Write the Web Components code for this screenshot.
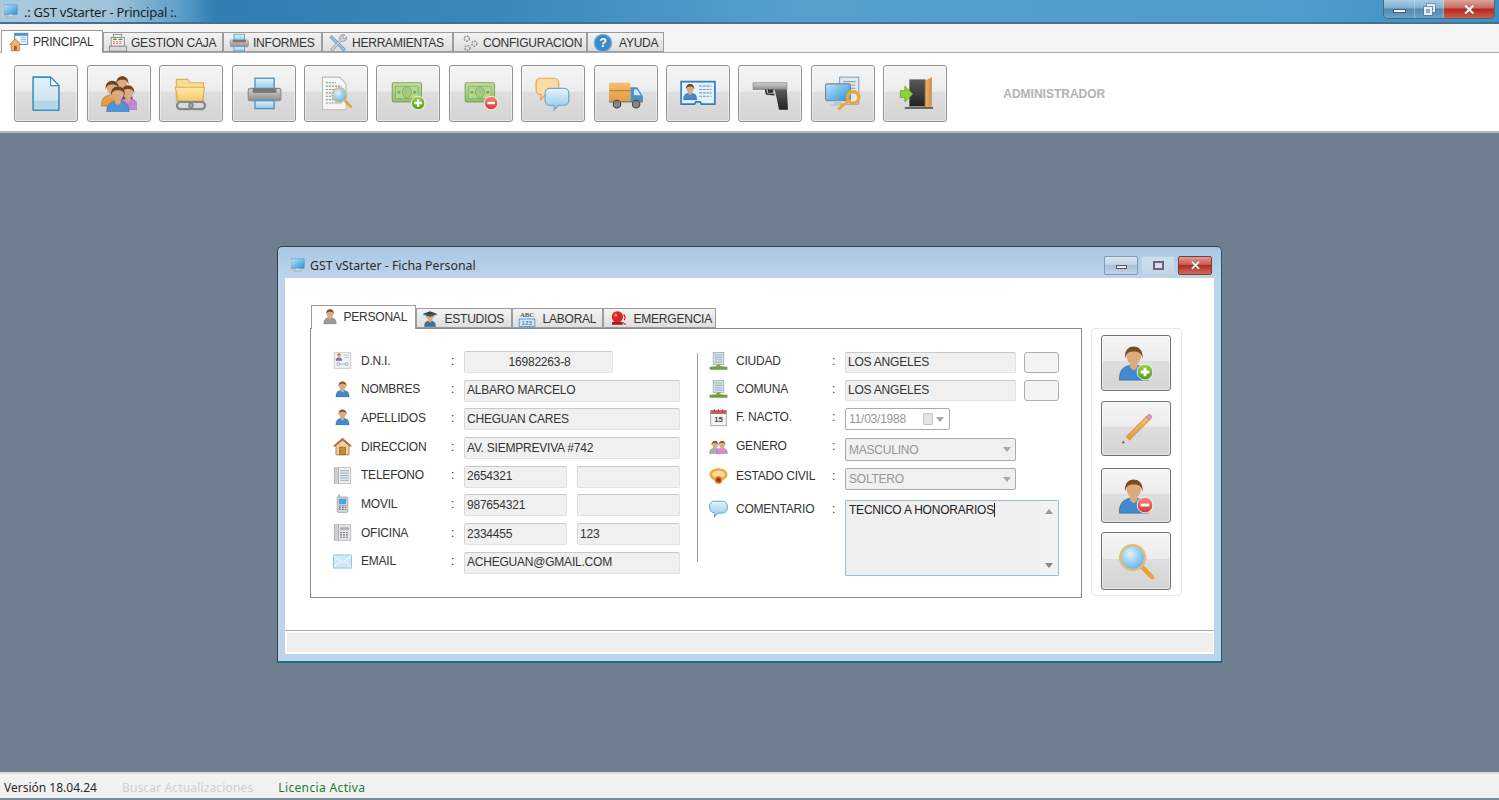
<!DOCTYPE html>
<html lang="es"><head><meta charset="utf-8"><title>GST vStarter</title>
<style>
html,body{margin:0;padding:0;height:800px;width:1499px;overflow:hidden;background:#6f7e91;font:12px "Liberation Sans",Arial,sans-serif;color:#333}
</style></head><body>
<gst-app>
  <gst-titlebar slot="title" icon="computer">.: GST vStarter - Principal :.</gst-titlebar>
  <gst-tabs slot="tabs">
    <gst-tab active w="102" icon="home" pad="7" gap="4">PRINCIPAL</gst-tab>
    <gst-tab w="120" icon="register" pad="4" gap="3">GESTION CAJA</gst-tab>
    <gst-tab w="99" icon="printer" pad="5" gap="4">INFORMES</gst-tab>
    <gst-tab w="131" icon="tools" pad="5" gap="4">HERRAMIENTAS</gst-tab>
    <gst-tab w="134" icon="gears" pad="6" gap="3">CONFIGURACION</gst-tab>
    <gst-tab w="77" icon="help" pad="5" gap="6">AYUDA</gst-tab>
  </gst-tabs>
  <gst-toolbar slot="toolbar">
    <gst-toolbtn icon="doc"></gst-toolbtn><gst-toolbtn icon="people"></gst-toolbtn><gst-toolbtn icon="folderlink"></gst-toolbtn><gst-toolbtn icon="printer"></gst-toolbtn><gst-toolbtn icon="preview"></gst-toolbtn><gst-toolbtn icon="moneyplus"></gst-toolbtn><gst-toolbtn icon="moneyminus"></gst-toolbtn><gst-toolbtn icon="chat"></gst-toolbtn><gst-toolbtn icon="truck"></gst-toolbtn><gst-toolbtn icon="idcard"></gst-toolbtn><gst-toolbtn icon="gun"></gst-toolbtn><gst-toolbtn icon="netkey"></gst-toolbtn><gst-toolbtn icon="exit"></gst-toolbtn>
    <span slot="label">ADMINISTRADOR</span>
  </gst-toolbar>
  <gst-window slot="desktop" icon="computer" caption="GST vStarter - Ficha Personal">
    <gst-subtabs slot="tabs">
      <gst-tab small active w="105" icon="usergray" pad="9" gap="5">PERSONAL</gst-tab>
      <gst-tab small w="96" icon="graduate" pad="4" gap="6">ESTUDIOS</gst-tab>
      <gst-tab small w="91" icon="abc" pad="5" gap="7">LABORAL</gst-tab>
      <gst-tab small w="113" icon="alarm" pad="5" gap="7">EMERGENCIA</gst-tab>
    </gst-subtabs>
    <gst-formcol slot="left" style="--label:90px;--icon:28px;--lift:-3px">
      <gst-row icon="dnicard" label="D.N.I."><gst-field center style="width:149px">16982263-8</gst-field></gst-row>
      <gst-row icon="userblue" label="NOMBRES"><gst-field>ALBARO MARCELO</gst-field></gst-row>
      <gst-row icon="userblue" label="APELLIDOS"><gst-field>CHEGUAN CARES</gst-field></gst-row>
      <gst-row icon="house" label="DIRECCION"><gst-field>AV. SIEMPREVIVA #742</gst-field></gst-row>
      <gst-row icon="phonebook" label="TELEFONO"><gst-field>2654321</gst-field><gst-field></gst-field></gst-row>
      <gst-row icon="mobile" label="MOVIL"><gst-field>987654321</gst-field><gst-field></gst-field></gst-row>
      <gst-row icon="office" label="OFICINA"><gst-field>2334455</gst-field><gst-field>123</gst-field></gst-row>
      <gst-row icon="mail" label="EMAIL"><gst-field>ACHEGUAN@GMAIL.COM</gst-field></gst-row>
    </gst-formcol>
    <gst-formcol slot="right" style="--label:96px;--icon:27px;--lift:-4px">
      <gst-row icon="city" label="CIUDAD" style="height:21px"><gst-field style="width:171px;flex:none">LOS ANGELES</gst-field><gst-blank></gst-blank></gst-row>
      <gst-row icon="city" label="COMUNA" style="height:21px"><gst-field style="width:171px;flex:none">LOS ANGELES</gst-field><gst-blank></gst-blank></gst-row>
      <gst-row icon="calendar" label="F. NACTO." style="height:22px"><gst-combo date style="width:105px">11/03/1988</gst-combo></gst-row>
      <gst-row icon="couple" label="GENERO" style="height:23px;margin-top:1px;--lift:-7px"><gst-combo style="width:171px">MASCULINO</gst-combo></gst-row>
      <gst-row icon="ring" label="ESTADO CIVIL" style="height:22px;--lift:-6px"><gst-combo style="width:171px">SOLTERO</gst-combo></gst-row>
      <gst-row icon="bubble" label="COMENTARIO" top style="height:76px;margin-top:3px"><gst-memo>TECNICO A HONORARIOS</gst-memo></gst-row>
    </gst-formcol>
    <gst-sidebtn slot="side" icon="userplus" style="height:56px;margin-top:6px"></gst-sidebtn>
    <gst-sidebtn slot="side" icon="pencil" style="height:55px;margin-top:10px"></gst-sidebtn>
    <gst-sidebtn slot="side" icon="userminus" style="height:55px;margin-top:12px"></gst-sidebtn>
    <gst-sidebtn slot="side" icon="search" style="height:58px;margin-top:9px"></gst-sidebtn>
  </gst-window>
  <gst-status slot="status">
    <span>Versión 18.04.24</span><span style="color:#cfcfcf;margin-left:25px;letter-spacing:.15px">Buscar Actualizaciones</span><span style="color:#1f7a2c;margin-left:25px;letter-spacing:.35px">Licencia Activa</span>
  </gst-status>
</gst-app>
<script>
const DEFS=`<defs>
<linearGradient id="blue" x1="0" y1="0" x2="0" y2="1"><stop offset="0" stop-color="#e6f4fc"/><stop offset="1" stop-color="#8cc6ea"/></linearGradient>
<linearGradient id="paper" x1="0" y1="0" x2="0" y2="1"><stop offset="0" stop-color="#e3f1f8"/><stop offset=".7" stop-color="#cfe5f0"/><stop offset=".71" stop-color="#b3d6e6"/><stop offset="1" stop-color="#b3d6e6"/></linearGradient>
<linearGradient id="gray" x1="0" y1="0" x2="0" y2="1"><stop offset="0" stop-color="#d4d4d4"/><stop offset="1" stop-color="#8b8b8b"/></linearGradient>
<linearGradient id="yellow" x1="0" y1="0" x2="0" y2="1"><stop offset="0" stop-color="#ffe9a8"/><stop offset="1" stop-color="#f5c868"/></linearGradient>
<linearGradient id="orange" x1="0" y1="0" x2="0" y2="1"><stop offset="0" stop-color="#f6bd72"/><stop offset="1" stop-color="#e09a42"/></linearGradient>
<linearGradient id="green" x1="0" y1="0" x2="0" y2="1"><stop offset="0" stop-color="#c7e0a6"/><stop offset="1" stop-color="#8fbf6a"/></linearGradient>
<linearGradient id="badgeg" x1="0" y1="0" x2="0" y2="1"><stop offset="0" stop-color="#9fd34a"/><stop offset="1" stop-color="#4f9a14"/></linearGradient>
<linearGradient id="badger" x1="0" y1="0" x2="0" y2="1"><stop offset="0" stop-color="#f58a80"/><stop offset="1" stop-color="#d8352c"/></linearGradient>
<linearGradient id="screen" x1="0" y1="0" x2="1" y2="1"><stop offset="0" stop-color="#bfe6fb"/><stop offset="1" stop-color="#2b8fd6"/></linearGradient>
<linearGradient id="wood" x1="0" y1="0" x2="1" y2="0"><stop offset="0" stop-color="#e9b77c"/><stop offset="1" stop-color="#c98a48"/></linearGradient>
<linearGradient id="dark" x1="0" y1="0" x2="0" y2="1"><stop offset="0" stop-color="#5a5a5a"/><stop offset="1" stop-color="#222"/></linearGradient>
<radialGradient id="lens" cx=".4" cy=".35" r=".7"><stop offset="0" stop-color="#dff3ff"/><stop offset="1" stop-color="#59aee6"/></radialGradient>
</defs>`;
const person=(cx,top,s,shirt='#4d94d6',hair='#6d4522',skin='#dcaa7c')=>`<g transform="translate(${cx} ${top}) scale(${s})"><path d="M-8 18c0-5 3-7.500 8-7.500s8 2.500 8 7.500v1H-8z" fill="${shirt}" stroke="#00000040" stroke-width=".6"/><path d="M-2 8h4v4l-2 1.500L-2 12z" fill="${skin}"/><ellipse cy="5.500" rx="4" ry="5" fill="${skin}"/><path d="M-4.800 7C-6.200-2 6.200-2 4.800 7 4.300 4 3 3 0 3S-4.300 4-4.800 7z" fill="${hair}"/></g>`;
const badge=(cx,cy,r,plus)=>`<circle cx="${cx}" cy="${cy}" r="${r}" fill="url(#${plus?'badgeg':'badger'})" stroke="#fff" stroke-width=".7"/><path d="M${cx-r*.55} ${cy}h${r*1.1}${plus?`M${cx} ${cy-r*.55}v${r*1.1}`:''}" stroke="#fff" stroke-width="${r*.36}"/>`;
const lens=(x,y,r)=>`<path d="M${x+r*.75} ${y+r*.75}L${x+r*1.6} ${y+r*1.6}" stroke="#eda035" stroke-width="${r*.36}" stroke-linecap="round"/><circle cx="${x}" cy="${y}" r="${r}" fill="url(#lens)" stroke="#e3bd76" stroke-width="${r*.2}"/>`;
const monitor=`<rect x="5" y="5" width="24" height="17" rx="1.500" fill="url(#screen)" stroke="#5c8fb5" stroke-width="1"/><path d="M14 22h6l1 4h-8z" fill="#cfd6dc"/><path d="M9 26h16v1.500H9z" fill="#9fb0bd"/><path d="M2 7h3v19H2z" fill="#c9ced2"/>`;
const money=`<rect x="2" y="6" width="26" height="17" rx="1.500" fill="url(#green)" stroke="#7ea65c"/><rect x="5" y="9" width="20" height="11" fill="#b6d692" stroke="#86ac66" stroke-width=".7"/><ellipse cx="15" cy="14.500" rx="4" ry="5" fill="#a3c97e" stroke="#7ea65c" stroke-width=".7"/><circle cx="8" cy="14.500" r="1.300" fill="#7ea65c"/><circle cx="22" cy="14.500" r="1.300" fill="#7ea65c"/>`;
const city=`<rect x="7" y="1" width="18" height="20" fill="#d3dfe8" stroke="#7f97a8"/><path d="M10 5h12M10 9h12M10 13h12M10 17h12" stroke="#a9bccb" stroke-width="2"/><path d="M13 21h6l1 4h-8z" fill="#b78b52"/><path d="M1 25c6-1.500 24-1.500 30 0v5H1z" fill="#6aa33d"/>`;
const ICONS={
computer:monitor,
home:`<rect x="9" y="2" width="21" height="18" fill="#e8f3fa" stroke="#3d7fbf" stroke-width="1.300"/><rect x="9" y="2" width="21" height="4" fill="#4a90d0"/><path d="M19 9h8M19 12h8M19 15h8" stroke="#8ab2cf" stroke-width="1.300"/><path d="M1 20L10 11l9 9h-2.500v10h-13V20z" fill="#f0b26a" stroke="#a8641f" stroke-width="1.100"/><rect x="8" y="22" width="4.500" height="8" fill="#a8641f"/>`,
register:`<rect x="9" y="2" width="13" height="5" fill="#eee" stroke="#666"/><rect x="5" y="7" width="21" height="14" fill="#f2f2ec" stroke="#666"/><path d="M8 10h6M17 10h6" stroke="#3b9a3b" stroke-width="2"/><path d="M8 14h15M8 17h15" stroke="#d55" stroke-width="1.500" stroke-dasharray="3 2"/><rect x="2" y="21" width="28" height="8" fill="#d8d8d8" stroke="#666"/>`,
printer:`<rect x="8" y="2" width="17" height="10" fill="url(#blue)" stroke="#4f93bd" stroke-width="1.200"/><rect x="2" y="11" width="29" height="11" rx="2" fill="url(#gray)" stroke="#8d8d8d"/><rect x="6" y="11" width="21" height="4" fill="#73787c"/><rect x="8" y="22" width="17" height="7" fill="url(#blue)" stroke="#4f93bd" stroke-width="1.200"/>`,
tools:`<path d="M6 4l22 22-3 3L3 7z" fill="#8fc3e8" stroke="#3e78a8"/><path d="M27 3a6 6 0 0 0-8 8L4 26l3 3L22 13a6 6 0 0 0 8-7l-4 3-3-2z" fill="#d0d4d8" stroke="#777"/>`,
gears:`<g fill="none" stroke="#9a9a9a" stroke-width="2.600"><circle cx="11" cy="9" r="4" stroke-dasharray="3 1.500"/><circle cx="23" cy="17" r="4" stroke-dasharray="3 1.500"/><circle cx="12" cy="24" r="4" stroke-dasharray="3 1.500"/></g>`,
help:`<circle cx="16" cy="16" r="14" fill="#3d88c9" stroke="#7fb5e0" stroke-width="2"/><text x="16" y="23" font-family="Liberation Sans" font-size="20" font-weight="700" fill="#fff" text-anchor="middle">?</text>`,
doc:`<path d="M4.500 1h15.500l7.500 7.500V30.500H4.500z" fill="url(#paper)" stroke="#3b93bd" stroke-width="1.400" stroke-linejoin="round"/><path d="M20 1v7.500h7.500z" fill="#f4fafd" stroke="#3b93bd" stroke-linejoin="round"/>`,
people:`${person(19,0,1.100,'#6b4a9a')}${person(10,4,1.200,'#e89b3c')}${person(24,8,1.150,'#c784d6')}${person(15,9,1.250,'#4d94d6')}`,
folderlink:`<path d="M3 3h10l2 3h12v16H3z" fill="#f8dc92" stroke="#dcb055"/><path d="M2 10h26l-2 13H5z" fill="url(#yellow)" stroke="#dcb055"/><g fill="none" stroke="#85888a" stroke-width="2"><rect x="3.500" y="23" width="14" height="6.500" rx="3.200"/><rect x="14.500" y="23" width="14" height="6.500" rx="3.200"/></g>`,
preview:`<path d="M4 1h15l6 6v23H4z" fill="#f7f7f4" stroke="#bbb"/><path d="M7 6h9M7 9h14M7 12h8M7 15h7M7 18h7M7 21h8M7 24h14" stroke="#8d979d" stroke-width="1.100" stroke-dasharray="2 .7"/>${lens(19,17,6.500)}`,
moneyplus:money+badge(25,24,6,true),
moneyminus:money+badge(25,24,6,false),
chat:`<path d="M4 2h13a4 4 0 0 1 4 4v7a4 4 0 0 1-4 4h-8l-4 4 .5-4.500A4 4 0 0 1 1 13V6a4 4 0 0 1 3-4z" fill="#fcdca4" stroke="#e3a75a" stroke-width="1.100"/><path d="M13 11h13a4 4 0 0 1 4 4v7a4 4 0 0 1-4 4h-5l-4 4 .2-4H13a4 4 0 0 1-4-4v-7a4 4 0 0 1 4-4z" fill="url(#blue)" stroke="#6fa8cc" stroke-width="1.100"/>`,
truck:`<rect x="1" y="6" width="19" height="17" rx="1" fill="url(#orange)"/><path d="M1 13h19" stroke="#c77a20"/><path d="M20 10h6l5 8v5H20z" fill="#4c8fc0"/><path d="M23 12h3l3 5h-6z" fill="#cfe8f7"/><circle cx="8" cy="25" r="3.300" fill="#888" stroke="#444"/><circle cx="25" cy="25" r="3.300" fill="#888" stroke="#444"/><path d="M1 23h30" stroke="#777"/>`,
idcard:`<path d="M1 5h30v20H19l-1-2h-4l-1 2H1z" fill="#e6f2fb" stroke="#2f7fc0" stroke-width="1.500"/>${person(9,7,.75,'#3f8ad0')}<path d="M17 9h11M17 12h11M17 15h11M17 18h11" stroke="#6f9dbd" stroke-width="1.100" stroke-dasharray="2.500 .8"/>`,
gun:`<path d="M1 6h30v6H1z" fill="url(#gray)" stroke="#777" stroke-width=".6"/><path d="M14 12h5v3h-5z" fill="#333"/><path d="M20 12h11l1 18h-8l-2-10z" fill="url(#dark)"/><path d="M12 12l1 4 7 .5" fill="none" stroke="#333" stroke-width="1.500"/>`,
netkey:`<rect x="13" y="1" width="17" height="24" fill="#e0e8ee" stroke="#8fa0ae"/><path d="M16 5h11M16 8h11M16 11h11" stroke="#8aa7bc"/><rect x="0.500" y="7" width="22" height="15" rx="1.500" fill="url(#screen)" stroke="#6f8496"/><path d="M8 22h7v3h3v1.500H5V25h3z" fill="#bcc6ce"/><circle cx="25" cy="19" r="5" fill="none" stroke="#eba83a" stroke-width="3"/><path d="M22 22.500l-9 8-2-1 .5-2 2-.5.5-2 2-.5 4-3.500z" fill="#eba83a"/>`,
exit:`<rect x="11" y="3" width="14" height="24" fill="url(#dark)"/><path d="M25 4l6-3v26l-6 1z" fill="url(#wood)"/><path d="M25 3v25" stroke="#a5712f"/><rect x="7" y="27.500" width="25" height="1.800" fill="#666"/><path d="M3 13h4V9l7 7-7 7v-4H3z" fill="#8fd23a" stroke="#5ea321" stroke-width=".7"/>`,
usergray:person(16,2,1.400,'#9a9a9a','#6d4522'),
userblue:person(16,2,1.400,'#3f8ad0','#8a5a2c'),
graduate:`${person(16,6,1.250,'#3f6f9c')}<path d="M3 7l13-5 13 5-13 5z" fill="#333c46"/><path d="M4 7h24v3H4z" fill="#3f7f6f" opacity=".5"/>`,
abc:`<text x="16" y="12" font-family="Liberation Serif" font-weight="700" font-size="12" text-anchor="middle" fill="#555">ABC</text><rect x="2" y="16" width="28" height="13" fill="#d6e9f8" stroke="#2f7fc0" stroke-width="1.300"/><text x="16" y="26.500" font-family="Liberation Sans" font-weight="700" font-size="10" text-anchor="middle" fill="#2f7fc0" letter-spacing="1">123</text>`,
alarm:`<circle cx="15" cy="12" r="10" fill="#e02424"/><circle cx="12" cy="9" r="3" fill="#f58a80"/><path d="M6 21h17l2 5H5z" fill="#a81717"/><path d="M26 8c3 3 3 7 1 10M24 22l6 4" stroke="#b52020" stroke-width="2" fill="none"/>`,
dnicard:`<rect x="2" y="3" width="28" height="26" fill="#f0f2f4" stroke="#a8b0b6"/>${person(10,4,.650,'#7a6ab0')}<path d="M19 7h8M19 11h8" stroke="#9aa"/><circle cx="9" cy="22" r="2.500" fill="none" stroke="#6a87a0"/><circle cx="23" cy="22" r="2.500" fill="none" stroke="#6a87a0"/><path d="M12 22h8" stroke="#6a87a0"/>`,
house:`<path d="M1 15L16 2l15 13h-4v15H5V15z" fill="#eed3a0" stroke="#8a6a3a" stroke-width="1.200"/><path d="M1 15L16 2l15 13-3 1L16 6 4 16z" fill="#b36b2d"/><rect x="11" y="17" width="10" height="13" fill="#c98a38" stroke="#8a5a20"/>`,
phonebook:`<rect x="2" y="3" width="7" height="26" fill="#cfcfcf" stroke="#999"/><rect x="9" y="3" width="21" height="26" fill="#eef2f5" stroke="#999"/><path d="M12 8h15M12 12h15M12 16h15M12 20h15M12 24h15" stroke="#8fa3b2" stroke-width="1.600"/>`,
mobile:`<rect x="9" y="1" width="3" height="6" fill="#aaa"/><rect x="7" y="5" width="18" height="26" rx="2" fill="#d0d4d8" stroke="#8c9094"/><rect x="10" y="8" width="12" height="9" fill="#4da3dc"/><path d="M10 20h3M15 20h3M20 20h2M10 23h3M15 23h3M20 23h2M10 26h3M15 26h3M20 26h2" stroke="#666" stroke-width="1.500"/>`,
office:`<rect x="2" y="3" width="7" height="26" fill="#cfcfcf" stroke="#999"/><rect x="9" y="3" width="21" height="26" fill="#e4e7e9" stroke="#999"/><rect x="12" y="7" width="15" height="5" fill="#aab4ba"/><path d="M12 16h3M17 16h3M22 16h3M12 20h3M17 20h3M22 20h3M12 24h3M17 24h3M22 24h3" stroke="#666" stroke-width="2"/>`,
mail:`<rect x="1" y="5" width="30" height="22" fill="#cfe9f8" stroke="#79b4d8" stroke-width="1.300"/><path d="M1 6l15 12L31 6M1 26l11-11M31 26L20 15" fill="none" stroke="#fff" stroke-width="1.500"/>`,
city:city,
calendar:`<rect x="3" y="4" width="26" height="26" fill="#f5f5f5" stroke="#777"/><rect x="3" y="4" width="26" height="6" fill="#d9554c"/><path d="M9 2v5M16 2v5M23 2v5" stroke="#555" stroke-width="1.500"/><text x="16" y="24" font-family="Liberation Sans" font-size="13" font-weight="700" text-anchor="middle" fill="#444">15</text>`,
couple:`${person(10,3,1.150,'#a8adb2','#7a4e26')}${person(22,3,1.150,'#d88ad8','#8a5526')}`,
ring:`<ellipse cx="16" cy="11" rx="13" ry="8.500" fill="#f6dca0" stroke="#eda93a" stroke-width="4.500"/><circle cx="16" cy="20" r="6" fill="#c9461f" stroke="#eda93a" stroke-width="2"/><circle cx="16" cy="20" r="2" fill="#8a1f10"/>`,
bubble:`<path d="M9 2h14c5 0 8 4 8 10s-3 10-8 10h-8l-6 7 1-7c-5 0-9-4-9-10S4 2 9 2z" fill="url(#blue)" stroke="#5ea0cc" stroke-width="1.600"/>`,
userplus:person(14,1,1.600,'#3f8ad0','#7a4b22')+badge(24,24,7,true),
userminus:person(14,1,1.600,'#3f8ad0','#7a4b22')+badge(24,24,7,false),
pencil:`<path d="M7 23L25 5l3 3-18 18z" fill="url(#orange)" stroke="#c87f20" stroke-width=".7"/><path d="M25 5l1.500-1.500a1.800 1.800 0 0 1 2.500 0l.5.5a1.800 1.800 0 0 1 0 2.500L28 8z" fill="#d69ad0" stroke="#a56a9e" stroke-width=".5"/><path d="M7 23l3 3-6 2.500z" fill="#ecd6ae"/><path d="M3.500 29l1-2.500 1.500 1.500z" fill="#444"/>`,
search:lens(13,13,11),
};
class Base extends HTMLElement{
  constructor(){super();this.attachShadow({mode:'open'});}
  render(h){this.shadowRoot.innerHTML=h;}
}
const TXT=`font:12px "Liberation Sans",sans-serif;letter-spacing:-.22px`;
const reg=(n,c)=>customElements.define(n,c);
reg('gst-icon',class extends Base{connectedCallback(){const s=this.getAttribute('size')||16;this.render(`<style>:host{display:inline-flex;width:${s}px;height:${s}px;flex:none}svg{width:100%;height:100%;display:block}</style><svg viewBox="0 0 32 32" xmlns="http://www.w3.org/2000/svg">${DEFS}${ICONS[this.getAttribute('name')]||''}</svg>`);}});
reg('gst-app',class extends Base{connectedCallback(){this.render(`<style>:host{display:flex;flex-direction:column;width:1499px;height:800px;overflow:hidden}
.desk{flex:1;position:relative;background:#6f7e91;min-height:0}</style>
<slot name="title"></slot><slot name="tabs"></slot><slot name="toolbar"></slot><div class="desk"><slot name="desktop"></slot></div><slot name="status"></slot>`);}});
reg('gst-titlebar',class extends Base{connectedCallback(){this.render(`<style>:host{display:flex;align-items:flex-start;height:24px;box-sizing:border-box;background:linear-gradient(90deg,#a9c9de 0,#9fc3da 110px,#5d9ec9 180px,#2f7eb3 215px,#3a89bd 500px,#55a0cd 800px,#4e9ccb 1300px,#3f8fc2 1499px);border-bottom:2px solid #46708e;font:13px "Noto Sans",sans-serif;color:#222;position:relative}
.l{display:flex;align-items:center;height:22px;gap:5px;padding-left:1px}
.t{letter-spacing:-.25px;white-space:nowrap;padding-top:2px}
.caps{display:flex;position:absolute;right:4px;top:0;height:19px;border:1px solid #3e6a88;border-top:0;border-radius:0 0 5px 5px;overflow:hidden;box-sizing:border-box}
.b{display:flex;align-items:center;justify-content:center;box-sizing:border-box;background:linear-gradient(#a8cde4,#7fb0d0 45%,#4f88ad 50%,#6da3c6);border-right:1px solid #cfe0ec66}
.x{background:linear-gradient(#dfa49b,#c8695e 45%,#b3261b 50%,#cf5f4a);border-right:0}
.m{width:13px;height:4px;margin-top:4px;background:#eef3f6;border:1px solid #3f5f78;box-sizing:border-box}
.r{position:relative;width:11px;height:11px;display:block}
.r::before,.r::after{content:"";position:absolute;box-sizing:border-box;width:8px;height:8px;border:2px solid #e8eef2;outline:1px solid #4b6f8880}
.r::before{right:0;top:0}.r::after{left:0;bottom:0;background:#7fb0d0}
.xx{font:700 15px "Liberation Sans";color:#f3f3f3;line-height:1;text-shadow:0 0 1px #444}
</style><div class="l"><gst-icon name="${this.getAttribute('icon')}" size="18"></gst-icon><span class="t"><slot></slot></span></div>
<div class="caps"><div class="b" style="width:31px"><i class="m"></i></div><div class="b" style="width:29px"><i class="r"></i></div><div class="b x" style="width:50px"><span class="xx" aria-hidden="true">✕</span></div></div>`);}});
const stripCss=`:host{display:flex;align-items:flex-end;box-sizing:border-box}`;
reg('gst-tabs',class extends Base{connectedCallback(){this.render(`<style>${stripCss}:host{height:29px;padding-left:1px;background:#f5f5f5;border-bottom:1px solid #a9a9a9}</style><slot></slot>`);}});
reg('gst-subtabs',class extends Base{connectedCallback(){this.render(`<style>${stripCss}:host{height:23px;position:relative;z-index:1;padding-left:.5px}</style><slot></slot>`);}});
reg('gst-tab',class extends Base{connectedCallback(){const a=this.hasAttribute('active'),sm=this.hasAttribute('small'),
 w=this.getAttribute('w'),p=this.getAttribute('pad'),g=this.getAttribute('gap');
 const h=a?(sm?23:22):20;
 this.render(`<style>:host{display:flex;align-items:center;box-sizing:border-box;width:${w}px;height:${h}px;padding-left:${p}px;gap:${g}px;flex:none;white-space:nowrap;color:#333;${TXT};
 border:1px solid #9c9c9c;${a?`border-bottom:0;background:#fff;margin-bottom:-1px;height:${h+1}px;padding-bottom:1px;position:relative;z-index:2`:`background:linear-gradient(#f3f3f3,#dedede);padding-top:1px`}}
 </style><gst-icon name="${this.getAttribute('icon')}" size="${sm?18:20}"></gst-icon><slot></slot>`);}});
reg('gst-toolbar',class extends Base{connectedCallback(){this.render(`<style>:host{display:flex;align-items:flex-start;height:80px;box-sizing:border-box;padding:12px 0 0 14.4px;background:#fff;border-bottom:2px solid #b7b7b7}
.btns{display:flex;gap:8.42px}.lab{margin-left:56px;margin-top:22px;color:#b3b3b3;font:700 12px "Liberation Sans",sans-serif}</style>
<div class="btns"><slot></slot></div><div class="lab"><slot name="label"></slot></div>`);}});
const btnCss=`display:flex;align-items:center;justify-content:center;box-sizing:border-box;border:1px solid #929292;border-radius:3px;background:linear-gradient(#f5f5f5 0,#ececec 46%,#dedede 47%,#d4d4d4 100%);box-shadow:inset 0 0 0 1px #ffffff70`;
reg('gst-toolbtn',class extends Base{connectedCallback(){this.render(`<style>:host{width:64px;height:57px;${btnCss}}</style><gst-icon name="${this.getAttribute('icon')}" size="36"></gst-icon>`);}});
reg('gst-sidebtn',class extends Base{connectedCallback(){this.render(`<style>:host{width:70px;flex:none;${btnCss};border-color:#737373;display:flex}</style><gst-icon name="${this.getAttribute('icon')}" size="36"></gst-icon>`);}});
reg('gst-window',class extends Base{connectedCallback(){this.render(`<style>:host{position:absolute;left:277px;top:113px;width:945px;height:417px;box-sizing:border-box;display:flex;flex-direction:column;border:1px solid #2f3f4f;border-right-color:#1f5a6e;border-bottom:2px solid #1c6f86;border-radius:5px 5px 0 0;background:linear-gradient(#aac7e2 0,#bcd3ea 30px,#bcd4ea 100%);color:#333}
.head{height:31px;flex:none;box-sizing:border-box;display:flex;align-items:center;padding:5px 9px 0 10px;font:12.3px "Noto Sans",sans-serif;color:#2b2b2b}
.head .cap{margin-left:4px}
.head .sp{flex:1}
.c{width:34px;height:19px;box-sizing:border-box;border:1px solid #7f9ab3;border-radius:2px;margin-left:3px;display:flex;align-items:center;justify-content:center;background:linear-gradient(#dbe6f1,#c3d4e5 45%,#a8bfd6 50%,#c5d6e6)}
.mx{background:linear-gradient(#cfdfee,#c3d6e8);border-color:#bcd0e2}
.cl{border-color:#7a3b36;background:linear-gradient(#e29a90,#c9594d 45%,#b32d22 50%,#d2695c)}
.c i{display:block;box-sizing:border-box}
.c1 i{width:11px;height:4px;margin-top:3px;background:#eee;border:1px solid #556}
.c2 i{width:11px;height:9px;border:2px solid #667;background:#dde}
.xx{color:#f3f3f3;font:700 13px "Liberation Sans";line-height:1;text-shadow:0 0 1px #333}
.client{flex:1;margin:0 7px 7px 7px;background:#fff;display:flex;flex-direction:column;min-height:0}
.top{flex:1;display:flex;padding:27px 0 0 25px;min-height:0;align-items:flex-start}
.tabbox{width:772px;flex:none}
.panel{box-sizing:border-box;height:270px;border:1px solid #8a8a8a;display:flex;padding:22px 0 0 22px;background:#fff}
.sep{width:1px;height:209px;background:#9a9a9a;margin:2px 11px 0 17px;flex:none}
.side{box-sizing:border-box;width:91px;height:268px;margin:23px 0 0 9px;border:1px solid #e8e8e8;border-radius:4px;padding-left:9px;display:flex;flex-direction:column}
.foot{height:24px;box-sizing:border-box;border-top:1px solid #a8a8a8;padding:2px 1px 2px 2px;flex:none}
.foot div{height:100%;background:#f0eeee}
</style>
<div class="head"><gst-icon name="${this.getAttribute('icon')}" size="18"></gst-icon><span class="cap">${this.getAttribute('caption')}</span><span class="sp"></span>
<div class="c c1"><i></i></div><div class="c mx c2"><i></i></div><div class="c cl"><span class="xx" aria-hidden="true">✕</span></div></div>
<div class="client"><div class="top"><div class="tabbox"><slot name="tabs"></slot><div class="panel"><slot name="left"></slot><div class="sep"></div><slot name="right"></slot></div></div>
<div class="side"><slot name="side"></slot></div></div><div class="foot"><div></div></div></div>`);}});
reg('gst-formcol',class extends Base{connectedCallback(){const right=this.getAttribute('slot')==='right';this.render(`<style>:host{display:flex;flex-direction:column;gap:${right?'7px':'6.7px'};${right?'margin-top:1px;':''}}</style><slot></slot>`);}});
reg('gst-row',class extends Base{connectedCallback(){const top=this.hasAttribute('top');this.render(`<style>:host{display:flex;height:22px;align-items:${top?'flex-start':'center'};${TXT};color:#333;white-space:nowrap}
.i{width:var(--icon);flex:none;display:flex;margin-top:${top?'0':'-3px'}}.l{width:var(--label);flex:none;margin-top:${top?'2px':'var(--lift)'}}.d{width:13px;flex:none;${top?'margin-top:2px':'margin-top:var(--lift)'}}
.f{display:flex;gap:10px;width:216px;height:100%}</style>
<span class="i"><gst-icon name="${this.getAttribute('icon')}" size="19"></gst-icon></span><span class="l">${this.getAttribute('label')}</span><span class="d">:</span><div class="f"><slot></slot></div>`);}});
reg('gst-field',class extends Base{connectedCallback(){const c=this.hasAttribute('center');this.render(`<style>:host{display:flex;align-items:center;box-sizing:border-box;flex:1;min-width:0;height:100%;padding:0 0 1px 2px;${c?'justify-content:center;flex:none;':''}background:#f0f0f0;border:1px solid #e2e2e2;border-top-color:#c9c9c9;border-left-color:#d8d8d8;border-radius:2px;color:#333;${TXT}}</style><slot></slot>`);}});
reg('gst-blank',class extends Base{connectedCallback(){this.render(`<style>:host{display:block;box-sizing:border-box;width:35px;margin-left:-2px;height:100%;background:#f4f4f4;border:1px solid #aeaeae;border-radius:3px}</style>`);}});
reg('gst-combo',class extends Base{connectedCallback(){const d=this.hasAttribute('date');this.render(`<style>:host{display:flex;align-items:center;box-sizing:border-box;height:100%;padding-left:3px;background:${d?'#fff':'#f0f0f0'};border:1px solid #ababab;border-radius:2px;color:#969696;${TXT}}
.sp{flex:1}.a{width:0;height:0;border:4px solid transparent;border-top:5px solid #a8a8a8;border-bottom:0;margin-right:${d?'5px':'4px'}}
.c{width:10px;height:12px;margin:0 3px 0 0;background:#e4e4e4;border:1px solid #c4c4c4;border-radius:1px;box-sizing:border-box}</style><slot></slot><span class="sp"></span>${d?'<span class="c"></span>':''}<span class="a"></span>`);}});
reg('gst-memo',class extends Base{connectedCallback(){this.render(`<style>:host{display:flex;box-sizing:border-box;width:214px;height:100%;border:1px solid #9dbdd4;border-radius:1px;background:#efefef;color:#222;${TXT}}
.t{flex:1;padding:2px 3px}.k{display:inline-block;width:1px;height:14px;background:#222;vertical-align:-3px}
.s{width:18px;background:#f2f2f2;display:flex;flex-direction:column;justify-content:space-between;align-items:center;padding:8px 0 7px;box-sizing:border-box}
.u,.dn{width:0;height:0;border:4px solid transparent}.u{border-bottom:5px solid #999;border-top:0}.dn{border-top:5px solid #888;border-bottom:0}</style>
<div class="t"><slot></slot><span class="k"></span></div><div class="s"><i class="u"></i><i class="dn"></i></div>`);}});
reg('gst-status',class extends Base{connectedCallback(){this.render(`<style>:host{display:flex;align-items:center;height:28px;box-sizing:border-box;padding:2px 0 0 4px;background:#f2f2f2;border-top:2px solid #dcdcdc;border-bottom:2px solid #7d8a98;font:12px "Noto Sans",sans-serif;color:#2a2a2a}</style><slot></slot>`);}});
</script>
</body></html>
